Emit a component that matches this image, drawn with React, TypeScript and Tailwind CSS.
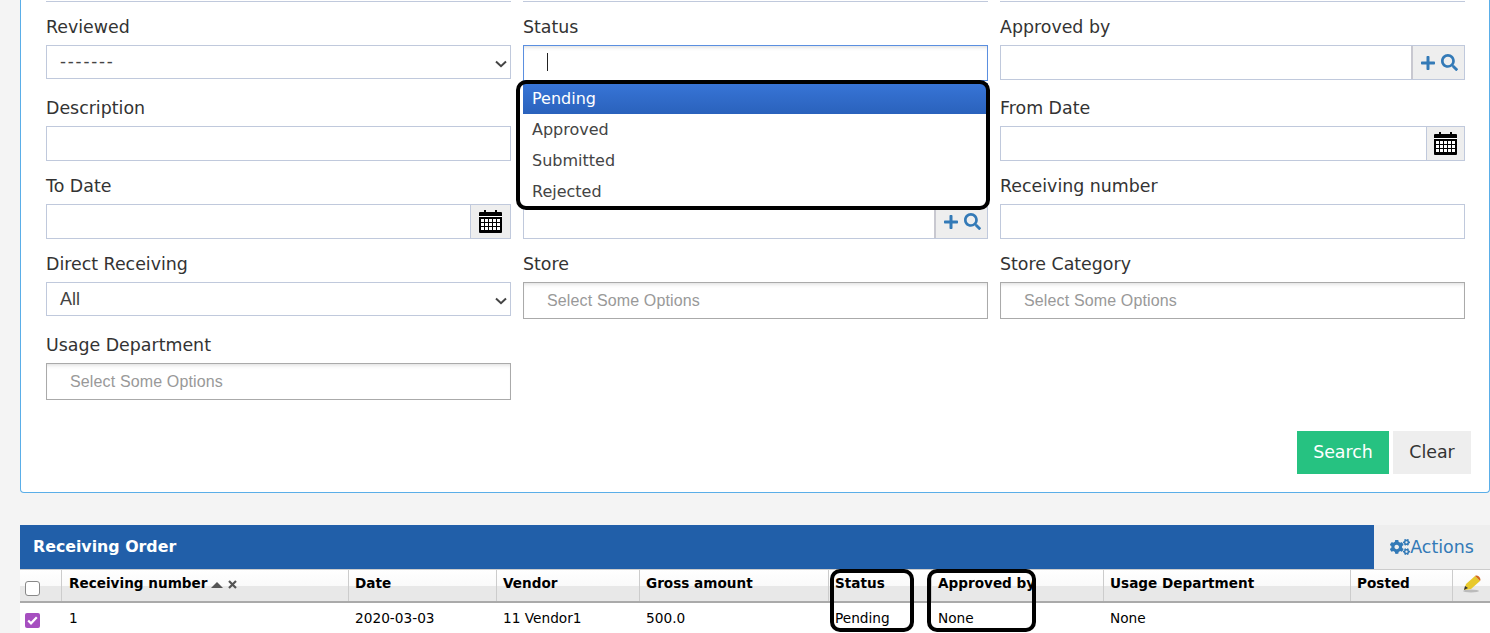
import type { ReactNode } from "react";
import { FaCogs, FaPlus, FaSearch } from "react-icons/fa";

const labelCls = "h-[20px] text-[17.4px] leading-[20px] text-[#333]";
const boxCls = "border border-[#c0c9dc] bg-white";

function Calendar() {
  return (
    <svg width="23" height="23" viewBox="0 0 23 23">
      <rect x="5" y="0" width="2" height="4" fill="#000" />
      <rect x="16" y="0" width="2" height="4" fill="#000" />
      <rect x="0" y="2" width="23" height="21" rx="1" fill="#000" />
      <rect x="0" y="6" width="23" height="1" fill="#fff" />
      {[2, 6, 10, 14, 18].map((x) =>
        [9, 13, 17].map((y) => <rect key={`${x}-${y}`} x={x} y={y} width="3" height="3" fill="#fff" />),
      )}
    </svg>
  );
}

function Chevron() {
  return (
    <svg width="12" height="8" viewBox="0 0 12 8" className="absolute right-[3px] top-[14px]">
      <path d="M1 1.5 6 6.2 11 1.5" fill="none" stroke="#444" strokeWidth="2" />
    </svg>
  );
}

function Field({ label, children, className }: { label: string; children?: ReactNode; className?: string }) {
  return (
    <div className={className}>
      <div className={labelCls}>{label}</div>
      {children}
    </div>
  );
}

function TextInput() {
  return <div className={`mt-[8px] h-[35px] ${boxCls}`} />;
}

function Select({ value, spaced }: { value: string; spaced?: boolean }) {
  return (
    <div className={`relative mt-[8px] h-[34px] ${boxCls} pl-[13px] font-['Liberation_Sans',sans-serif] text-[18px] leading-[32px] text-[#444] ${spaced ? "tracking-[1.8px]" : ""}`}>
      {value}
      <Chevron />
    </div>
  );
}

function DateInput({ addon = "w-[40px]" }: { addon?: string }) {
  return (
    <div className={`mt-[8px] flex h-[35px] ${boxCls}`}>
      <div className="flex-1" />
      <div className={`flex ${addon} items-center justify-center border-l border-[#c0c9dc] bg-[#eee]`}>
        <Calendar />
      </div>
    </div>
  );
}

function LookupInput() {
  return (
    <div className={`mt-[8px] flex h-[35px] ${boxCls}`}>
      <div className="flex-1" />
      <div className="flex w-[53px] items-center justify-center gap-[5px] border-l-2 border-[#c8c8d0] bg-[#eee] text-[#337ab7]">
        <FaPlus size={16} />
        <FaSearch size={17} />
      </div>
    </div>
  );
}

function Chosen() {
  return (
    <div className="mt-[8px] h-[37px] border border-[#aaa] bg-white pl-[23px] font-['Liberation_Sans',sans-serif] text-[16px] leading-[35px] tracking-[0.14px] text-[#999] shadow-[inset_0_4px_4px_-3px_rgba(0,0,0,0.15)]">
      Select Some Options
    </div>
  );
}

const COLUMNS = [
  { label: "Receiving number", value: "1", w: "w-[287px] pl-[7px]" },
  { label: "Date", value: "2020-03-03", w: "w-[148px] pl-[6px]" },
  { label: "Vendor", value: "11 Vendor1", w: "w-[143px] pl-[6px]" },
  { label: "Gross amount", value: "500.0", w: "w-[189px] pl-[6px]" },
  { label: "Status", value: "Pending", w: "w-[103px] pl-[6px]" },
  { label: "Approved by", value: "None", w: "w-[172px] pl-[6px]" },
  { label: "Usage Department", value: "None", w: "w-[247px] pl-[6px]" },
  { label: "Posted", value: "", w: "w-[102px] pl-[6px]" },
];

export default function App() {
  return (
    <div className="relative h-[633px] w-[1490px] overflow-hidden bg-[#f4f4f4] font-['DejaVu_Sans',sans-serif]">
      {/* Filter panel */}
      <div className="relative ml-[20px] h-[493px] rounded-b-[4px] border-x border-b border-[#5aaee8] bg-white pl-[25px]">
        <div className="grid w-[1419px] grid-cols-3 gap-x-[12px]">
          <div className="h-[2px] border-b border-[#c0c9dc]" />
          <div className="h-[2px] border-b border-[#c0c9dc]" />
          <div className="h-[2px] border-b border-[#c0c9dc]" />
        </div>

        <div className="mt-[15px] grid w-[1419px] grid-cols-3 gap-x-[12px]">
          <Field label="Reviewed">
            <Select value="-------" spaced />
          </Field>
          <Field label="Status">
            <div className="mt-[8px] h-[36px] border border-[#5b8fe0] bg-white pl-[23px] pt-[7px] shadow-[inset_0_4px_4px_-3px_rgba(0,0,0,0.15)]">
              <div className="h-[18px] w-px bg-[#222]" />
            </div>
          </Field>
          <Field label="Approved by">
            <LookupInput />
          </Field>

          <Field label="Description" className="mt-[17px]">
            <TextInput />
          </Field>
          <div />
          <Field label="From Date" className="mt-[17px]">
            <DateInput addon="w-[38px]" />
          </Field>

          <Field label="To Date" className="mt-[15px]">
            <DateInput />
          </Field>
          <Field label="" className="mt-[15px]">
            <LookupInput />
          </Field>
          <Field label="Receiving number" className="mt-[15px]">
            <TextInput />
          </Field>

          <Field label="Direct Receiving" className="mt-[15px]">
            <Select value="All" />
          </Field>
          <Field label="Store" className="mt-[15px]">
            <Chosen />
          </Field>
          <Field label="Store Category" className="mt-[15px]">
            <Chosen />
          </Field>

          <Field label="Usage Department" className="mt-[16px]">
            <Chosen />
          </Field>
        </div>

        <div className="mt-[31px] flex justify-end gap-[4px] pr-[18px] text-[17.4px]">
          <button className="h-[43px] w-[92px] bg-[#26c281] text-white">Search</button>
          <button className="h-[43px] w-[78px] bg-[#eee] text-[#333]">Clear</button>
        </div>
      </div>

      {/* Status dropdown */}
      <div className="absolute left-[523px] top-[83px] w-[465px] bg-white text-[16px] text-[#444]">
        <div className="h-[31px] bg-gradient-to-b from-[#3875d7] to-[#2a62bc] pl-[9px] leading-[31px] text-white">Pending</div>
        {["Approved", "Submitted", "Rejected"].map((o) => (
          <div key={o} className="h-[31px] pl-[9px] leading-[31px]">{o}</div>
        ))}
      </div>

      {/* Table */}
      <div className="ml-[20px] mt-[32px]">
        <div className="flex h-[44px]">
          <div className="flex-1 bg-[#215fa9] pl-[13px] text-[15.8px] font-bold leading-[44px] text-white">Receiving Order</div>
          <div className="flex w-[116px] items-center justify-center bg-[#eee] text-[17.4px] text-[#337ab7]">
            <FaCogs size={20} />
            Actions
          </div>
        </div>
        <div className="flex h-[34px] border-y border-b-2 border-t-[#ccc] border-b-[#aaa] bg-[linear-gradient(#fff_0,#fafafa_50%,#e8e8e8_50%,#e8e8e8_100%)] text-[13.6px] font-bold leading-[26px] text-black">
          <div className="flex w-[42px] shrink-0 items-center border-r border-[#ccc] pl-[5px]">
            <div className="mt-[5px] h-[15px] w-[15px] rounded-[3px] border border-[#888] bg-white" />
          </div>
          {COLUMNS.map((c, i) => (
            <div key={c.label} className={`${c.w} flex shrink-0 items-start whitespace-nowrap border-r border-[#ccc]`}>
              {c.label}
              {i === 0 && (
                <span className="ml-[4px] mt-[10px] flex items-center gap-[5px]">
                  <svg width="12" height="6" viewBox="0 0 12 6"><path d="M6 0 12 6H0z" fill="#555" /></svg>
                  <svg width="9" height="9" viewBox="0 0 9 9"><path d="M1 1l7 7M8 1 1 8" stroke="#555" strokeWidth="2.2" /></svg>
                </span>
              )}
            </div>
          ))}
          <div className="flex flex-1 items-start justify-center pt-[5px]">
            <svg width="20" height="18" viewBox="0 0 20 18">
              <ellipse cx="9" cy="16" rx="8" ry="1.5" fill="#bbb" />
              <path d="M2 15 4 9 13 1l5 5-9 8z" fill="#e8c92c" />
              <path d="M13 1c2-1 4 0 5 2s0 3 0 3z" fill="#d2691e" />
              <path d="M2 15l1-4 3 2z" fill="#333" />
            </svg>
          </div>
        </div>
        <div className="flex h-[30px] bg-white text-[13.7px] leading-[31px] text-black">
          <div className="flex w-[42px] shrink-0 items-center pl-[5px]">
            <div className="mt-[4px] flex h-[15px] w-[15px] items-center justify-center rounded-[2px] bg-[#a64fc0]">
              <svg width="11" height="9" viewBox="0 0 11 9"><path d="M1.2 4.5 4 7.3 9.8 1.2" fill="none" stroke="#fff" strokeWidth="2.2" /></svg>
            </div>
          </div>
          {COLUMNS.map((c) => (
            <div key={c.label} className={`${c.w} shrink-0 whitespace-nowrap`}>{c.value}</div>
          ))}
        </div>
      </div>

      {/* Hand-drawn annotation boxes */}
      <div className="absolute left-[516px] top-[80px] h-[130px] w-[474px] rounded-[10px] border-[4px] border-black blur-[0.7px]" />
      <div className="absolute left-[830px] top-[569px] h-[63px] w-[84px] rounded-[10px] border-[4px] border-black blur-[0.7px]" />
      <div className="absolute left-[927px] top-[569px] h-[63px] w-[109px] rounded-[10px] border-[4px] border-black blur-[0.7px]" />
    </div>
  );
}
